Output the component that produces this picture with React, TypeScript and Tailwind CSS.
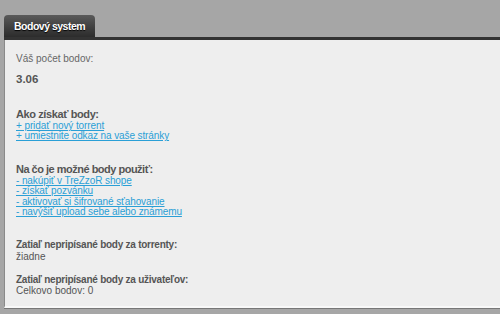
import React from "react";

export default function App() {
  const font = { fontFamily: '"Liberation Sans", Arial, sans-serif' };
  return (
    <div className="w-[500px] h-[314px] bg-[#a6a6a6] overflow-hidden pt-[15px] pl-[4px]" style={font}>
      <div className="w-[91px] h-[22px] rounded-t-[4px] bg-gradient-to-b from-[#5a5a5a] to-[#2c2c2c] text-white font-bold text-[10.5px] tracking-[-0.5px] leading-[23px] pl-[10px] whitespace-nowrap [text-shadow:0_1px_1px_#000]">
        Bodový system
      </div>
      <div className="h-[3px] bg-[#333333]" />
      <div className="h-[268px] bg-[#eeeeee] border-l border-b-2 border-l-[#8a8a8a] border-b-[#f8f8f8] shadow-[0_1px_0_#777] pl-[11px] pt-[13px] text-[#555555] whitespace-nowrap">
        <div className="leading-[12px] text-[10px] text-[#666]">Váš počet bodov:</div>
        <div className="mt-[7px] font-bold text-[11.5px] leading-[14px]">3.06</div>
        <div className="mt-[21px] font-bold text-[11px] tracking-[-0.4px] leading-[14px]">Ako získať body:</div>
        <div className="flex flex-col leading-[10px] text-[#2a9fd6] text-[10px] tracking-[-0.1px]">
          <a className="underline w-fit">+ pridať nový torrent</a>
          <a className="underline w-fit">+ umiestnite odkaz na vaše stránky</a>
        </div>
        <div className="mt-[21px] font-bold text-[11px] tracking-[-0.5px] leading-[14px]">Na čo je možné body použiť:</div>
        <div className="flex flex-col leading-[10.4px] text-[#2a9fd6] text-[10px] tracking-[-0.1px]">
          <a className="underline w-fit">- nakúpiť v TreZzoR shope</a>
          <a className="underline w-fit">- získať pozvánku</a>
          <a className="underline w-fit">- aktivovať si šifrované sťahovanie</a>
          <a className="underline w-fit">- navýšiť upload sebe alebo známemu</a>
        </div>
        <div className="mt-[21px] font-bold leading-[12px] text-[10px] tracking-[-0.25px]">Zatiaľ nepripísané body za torrenty:</div>
        <div className="leading-[11px] text-[10px]">žiadne</div>
        <div className="mt-[12px] font-bold leading-[12px] text-[10px] tracking-[-0.25px]">Zatiaľ nepripísané body za uživateľov:</div>
        <div className="leading-[10px] text-[10px]">Celkovo bodov: 0</div>
      </div>
    </div>
  );
}
